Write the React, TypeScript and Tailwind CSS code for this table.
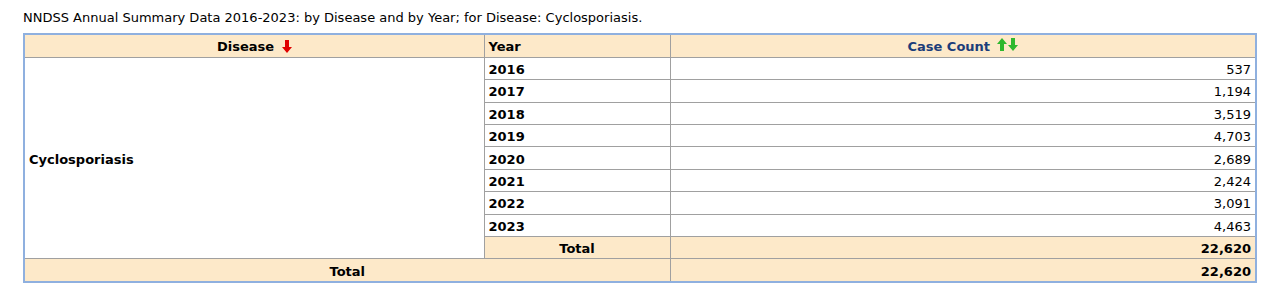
import React from 'react';

const rows = [
  { year: '2016', count: '537' },
  { year: '2017', count: '1,194' },
  { year: '2018', count: '3,519' },
  { year: '2019', count: '4,703' },
  { year: '2020', count: '2,689' },
  { year: '2021', count: '2,424' },
  { year: '2022', count: '3,091' },
  { year: '2023', count: '4,463' },
];

const Arrow = ({ color, up }: { color: string; up?: boolean }) => (
  <svg width="10" height="13" viewBox="0 0 10 13" className="inline-block align-[-2px]">
    <path
      d={up ? 'M5 0 L10 6 L7 6 L7 13 L3 13 L3 6 L0 6 Z' : 'M3 0 L7 0 L7 7 L10 7 L5 13 L0 7 L3 7 Z'}
      fill={color}
    />
  </svg>
);

const cell = 'border border-[#a0a0a0] px-[4px] pt-[3px] pb-0 h-[22.4px] leading-[18px]';
const head = 'bg-[#fde9c9] font-bold';

export default function App() {
  return (
    <div className="bg-white px-[23px] pt-[10px] text-[13px] text-black" style={{ fontFamily: '"DejaVu Sans", Verdana, sans-serif' }}>
      <p className="mb-[7px] leading-[16px]">
        NNDSS Annual Summary Data 2016-2023: by Disease and by Year; for Disease: Cyclosporiasis.
      </p>
      <div className="border-2 border-[#8fb0df] w-[1234px]">
        <table className="w-full border-collapse border-hidden">
          <colgroup>
            <col className="w-[459px]" />
            <col className="w-[186px]" />
            <col />
          </colgroup>
          <thead>
            <tr>
              <th className={`${cell} ${head} text-center`}>
                Disease <span className="ml-[3px]"><Arrow color="#e00000" /></span>
              </th>
              <th className={`${cell} ${head} text-left`}>Year</th>
              <th className={`${cell} ${head} text-center text-[#1c3d7a]`}>
                Case Count
                <span className="ml-[7px] inline-flex gap-[1px]">
                  <Arrow color="#2eb82e" up />
                  <Arrow color="#2eb82e" />
                </span>
              </th>
            </tr>
          </thead>
          <tbody>
            {rows.map((r, i) => (
              <tr key={r.year}>
                {i === 0 && (
                  <td rowSpan={9} className={`${cell} font-bold align-middle`}>
                    Cyclosporiasis
                  </td>
                )}
                <td className={`${cell} font-bold`}>{r.year}</td>
                <td className={`${cell} text-right`}>{r.count}</td>
              </tr>
            ))}
            <tr>
              <td className={`${cell} ${head} text-center`}>Total</td>
              <td className={`${cell} ${head} text-right`}>22,620</td>
            </tr>
            <tr>
              <td colSpan={2} className={`${cell} ${head} text-center`}>Total</td>
              <td className={`${cell} ${head} text-right`}>22,620</td>
            </tr>
          </tbody>
        </table>
      </div>
    </div>
  );
}
